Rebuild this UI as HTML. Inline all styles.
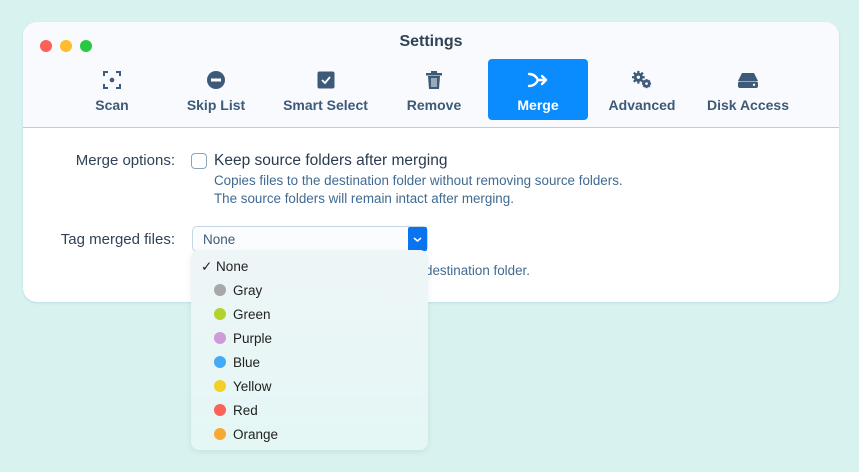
<!DOCTYPE html>
<html><head><meta charset="utf-8"><style>
*{margin:0;padding:0;box-sizing:border-box}
body{width:859px;height:472px;background:#d8f2ef;font-family:"Liberation Sans",sans-serif;position:relative;overflow:hidden}
.win{position:absolute;left:23px;top:22px;width:816px;height:280px;background:#fff;border-radius:14px;overflow:hidden;box-shadow:0 1px 2px rgba(150,180,220,.4)}
.tb{position:absolute;left:0;top:0;width:816px;height:106px;background:#f8fafd;border-bottom:1px solid #b9cde8}
.dot{position:absolute;top:18px;width:12px;height:12px;border-radius:50%}
.title{position:absolute;top:11px;left:0;width:816px;text-align:center;font-size:16px;font-weight:bold;color:#2f4257}
.tab{position:absolute;top:37px;height:61px;text-align:center;font-size:14px;font-weight:bold;color:#3d5a78;white-space:nowrap}
.tab svg{display:block;margin:11px auto 7px;height:20px}
.tab.sel{background:#0a8cff;color:#fff;border-radius:4px}
.lbl{position:absolute;font-size:15px;color:#2f4257;text-align:right}
.desc{position:absolute;font-size:13.4px;color:#3f6a92;line-height:18px;white-space:nowrap}
.menu{position:absolute;left:191px;top:250px;width:237px;height:200px;border-radius:8px;background:linear-gradient(#eef5f7,#e4f7f5);box-shadow:0 2px 6px rgba(100,140,160,.15)}
.it{position:absolute;left:42px;font-size:13.5px;color:#222}
.cd{position:absolute;left:23px;width:12px;height:12px;border-radius:50%}
</style></head><body>
<div class="win">
<div class="tb">
<div class="dot" style="left:17px;background:#fe5f57"></div>
<div class="dot" style="left:37px;background:#febc2e"></div>
<div class="dot" style="left:57px;background:#28c840"></div>
<div class="title">Settings</div>
<div class="tab" style="left:60px;width:58px"><svg width="20" height="20" viewBox="0 0 20 20" fill="none" stroke="#3d5a78" stroke-width="2"><path d="M2 6V2h4M14 2h4v4M18 14v4h-4M6 18H2v-4"/><circle cx="10" cy="10" r="2.3" fill="#3d5a78" stroke="none"/></svg>Scan</div>
<div class="tab" style="left:158px;width:70px"><svg width="20" height="20" viewBox="0 0 20 20"><circle cx="10" cy="10" r="9" fill="#3d5a78"/><rect x="5" y="8.5" width="10" height="3" fill="#fff"/></svg>Skip List</div>
<div class="tab" style="left:255px;width:95px"><svg width="20" height="20" viewBox="0 0 20 20"><rect x="1.5" y="1.5" width="17" height="17" rx="2" fill="#3d5a78"/><path d="M6 10l3 3 5-6" stroke="#fff" stroke-width="1.8" fill="none"/></svg>Smart Select</div>
<div class="tab" style="left:380px;width:62px"><svg width="20" height="20" viewBox="0 0 20 20" fill="#3d5a78"><rect x="2" y="3" width="16" height="2.5"/><rect x="7" y="1" width="6" height="2"/><path d="M4 6h12l-1 13H5z"/><path d="M8 8v9M10 8v9M12 8v9" stroke="#f8fafd" stroke-width="1"/></svg>Remove</div>
<div class="tab sel" style="left:465px;width:100px"><svg width="22" height="20" viewBox="0 0 22 20" fill="none" stroke="#fff" stroke-width="2.4" stroke-linecap="round" stroke-linejoin="round"><path d="M2 4q6 0 9 6q-3 6-9 6M11 10h8M15 6l4 4-4 4"/></svg>Merge</div>
<div class="tab" style="left:582px;width:74px"><svg width="26" height="20" viewBox="0 0 26 22" fill="#3d5a78"><circle cx="9" cy="8" r="5"/><circle cx="18" cy="15" r="4"/><g stroke="#3d5a78" stroke-width="2.5"><path d="M9 1v14M2 8h14M4 3l10 10M14 3L4 13"/><path d="M18 10v10M13 15h10M14.5 11.5l7 7M21.5 11.5l-7 7"/></g><circle cx="9" cy="8" r="1.8" fill="#f8fafd"/><circle cx="18" cy="15" r="1.5" fill="#f8fafd"/></svg>Advanced</div>
<div class="tab" style="left:680px;width:90px"><svg width="22" height="20" viewBox="0 0 22 20" fill="#3d5a78"><path d="M5 3h12l4 8H1z"/><rect x="1" y="11.5" width="20" height="6.5" rx="2"/><circle cx="17" cy="14.8" r="1.2" fill="#f8fafd"/></svg>Disk Access</div>
</div>
</div>
<div class="lbl" style="left:30px;top:152px;width:145px">Merge options:</div>
<div style="position:absolute;left:191px;top:153px;width:16px;height:16px;border:1px solid #8da3bb;border-radius:4px;background:#fff"></div>
<div style="position:absolute;left:214px;top:152px;font-size:15.5px;color:#2a3b4e">Keep source folders after merging</div>
<div class="desc" style="left:214px;top:172px">Copies files to the destination folder without removing source folders.<br>The source folders will remain intact after merging.</div>
<div class="lbl" style="left:30px;top:231px;width:145px">Tag merged files:</div>
<div style="position:absolute;left:192px;top:226px;width:236px;height:26px;border:1px solid #c7d6e6;border-radius:5px;background:#fafcfe"></div>
<div style="position:absolute;left:203px;top:232px;font-size:13.5px;color:#3d5a78">None</div>
<div style="position:absolute;left:408px;top:227px;width:19px;height:24px;background:#0a73f0;border-radius:2px"><svg width="19" height="24"><path d="M6 11l3.5 3 3.5-3" stroke="#fff" stroke-width="1.6" fill="none"/></svg></div>
<div class="desc" style="left:425px;top:262px">destination folder.</div>
<div class="menu">
<div class="it" style="left:10px;top:9px">✓ None</div>
<div class="cd" style="top:34px;background:#a8a8a8"></div><div class="it" style="top:33px">Gray</div>
<div class="cd" style="top:58px;background:#b2d32c"></div><div class="it" style="top:57px">Green</div>
<div class="cd" style="top:82px;background:#d09ad8"></div><div class="it" style="top:81px">Purple</div>
<div class="cd" style="top:106px;background:#43aaf6"></div><div class="it" style="top:105px">Blue</div>
<div class="cd" style="top:130px;background:#f2d027"></div><div class="it" style="top:129px">Yellow</div>
<div class="cd" style="top:154px;background:#fb6359"></div><div class="it" style="top:153px">Red</div>
<div class="cd" style="top:178px;background:#f9a832"></div><div class="it" style="top:177px">Orange</div>
</div>
</body></html>
